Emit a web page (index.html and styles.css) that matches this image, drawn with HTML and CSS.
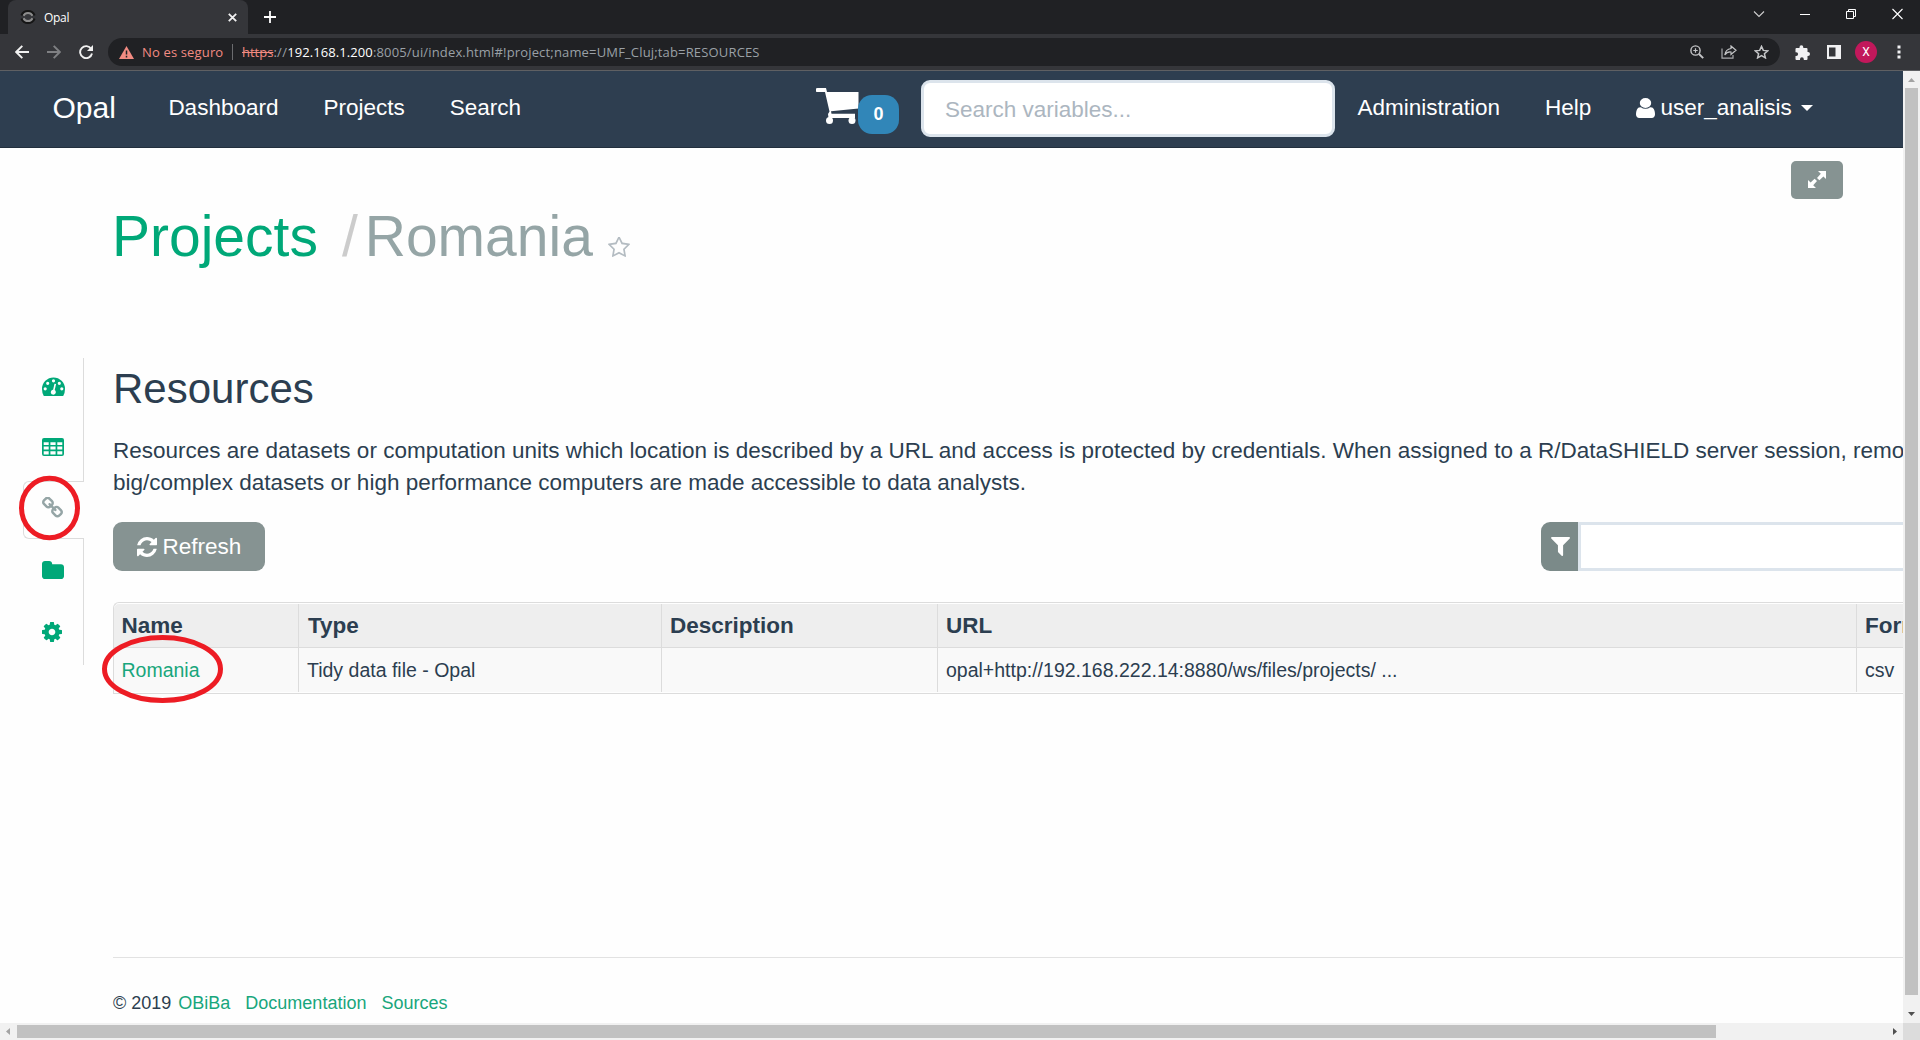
FILE: index.html
```html
<!DOCTYPE html>
<html lang="en">
<head>
<meta charset="utf-8">
<title>Opal</title>
<link rel="stylesheet" href="styles.css">
</head>
<body>
<div class="tabstrip">
  <div class="tab">
    <svg class="favicon" viewBox="0 0 16 16" width="16" height="16"><path d="M1.500 6.500A7 7 0 0 1 14.500 6.500M1.500 9.500A7 7 0 0 0 14.500 9.500" fill="none" stroke="#151515" stroke-width="2.200"/><path d="M3.500 6.800A5 5 0 0 1 12.500 6.800M3.500 9.200A5 5 0 0 0 12.500 9.200" fill="none" stroke="#8d8d8d" stroke-width="2"/></svg>
    <span class="tab-title">Opal</span>
    <svg class="tab-close" width="9" height="9" viewBox="0 0 9 9"><path d="M.8.8l7.400 7.400M8.200.8L.8 8.200" stroke="#f1f1f1" stroke-width="1.800"/></svg>
  </div>
  <svg class="new-tab" width="12" height="12" viewBox="0 0 12 12"><path d="M6 0v12M0 6h12" stroke="#fff" stroke-width="1.800"/></svg>
  <div class="window-controls">
    <svg width="12" height="12" viewBox="0 0 12 12"><path d="M1 3.500l5 5 5-5" fill="none" stroke="#cfcfcf" stroke-width="1.100"/></svg>
    <svg width="10" height="12" viewBox="0 0 10 12"><path d="M0 6.500h10" stroke="#fff"/></svg>
    <svg width="10" height="12" viewBox="0 0 10 12"><path d="M.5 3.500h7v7h-7zM2.500 3.500v-2h7v7h-2" fill="none" stroke="#fff"/></svg>
    <svg width="11" height="12" viewBox="0 0 11 12"><path d="M.5 1l10 10M10.500 1l-10 10" stroke="#fff" stroke-width="1.100"/></svg>
  </div>
</div>
<div class="toolbar">
  <svg class="nav-back" width="14" height="14" viewBox="0 0 14 14"><path d="M14 7H1.500M7.300.8L1.200 7l6.100 6.200" fill="none" stroke="#f1f1f1" stroke-width="1.900"/></svg>
  <svg class="nav-forward" width="14" height="14" viewBox="0 0 14 14"><path d="M0 7h12.500M6.700.8L12.800 7l-6.100 6.200" fill="none" stroke="#7f8083" stroke-width="1.900"/></svg>
  <svg class="nav-reload" width="14" height="14" viewBox="0 0 14 14"><path d="M12.200 3.900A6 6 0 1 0 13 8.500" fill="none" stroke="#f1f1f1" stroke-width="1.900"/><path d="M14 0v6H8z" fill="#f1f1f1"/></svg>
  <div class="omnibox">
    <svg class="warning" width="15" height="13" viewBox="0 0 15 13"><path d="M7.500 0L15 13H0z" fill="#f28b82"/><path d="M7.500 4.500v4M7.500 9.800v1.600" stroke="#202124" stroke-width="1.500"/></svg>
    <span class="insecure">No es seguro</span>
    <span class="divider"></span>
    <span class="url"><span class="scheme">https</span><span class="slashes">://</span><span class="host">192.168.1.200</span><span class="path">:8005/ui/index.html#!project;name=UMF_Cluj;tab=RESOURCES</span></span>
    <div class="omnibox-actions">
      <svg width="14" height="14" viewBox="0 0 14 14"><circle cx="5.500" cy="5.500" r="4.600" fill="none" stroke="#c4c5c7" stroke-width="1.400"/><path d="M3.300 5.500h4.400M5.500 3.300v4.400" stroke="#c4c5c7" stroke-width="1.200"/><path d="M9 9l4.200 4.200" stroke="#c4c5c7" stroke-width="1.900"/></svg>
      <svg width="16" height="14" viewBox="0 0 16 14"><path d="M1 3.500v9.700h11V10" fill="none" stroke="#a9aaad" stroke-width="1.200"/><path d="M10 1l5 4.200-5 4.200V7Q6 6.500 3.800 10 4.500 4.300 10 3.500z" fill="none" stroke="#c4c5c7" stroke-width="1.200"/></svg>
      <svg width="15" height="14" viewBox="0 0 15 14"><path d="M7.500 1.400l1.800 4 4.400.4-3.300 2.900 1 4.200-3.900-2.200-3.900 2.200 1-4.200L1.300 5.800l4.400-.4z" fill="none" stroke="#c4c5c7" stroke-width="1.500"/></svg>
    </div>
  </div>
  <svg class="ext" width="15" height="15" viewBox="0 0 15 15"><path d="M1.500 3h3V2.200a1.900 1.900 0 0 1 3.800 0V3h3.200q1 0 1 1v3h.5a2 2 0 0 1 0 4h-.5v3q0 1-1 1H8.800v-.8a1.900 1.900 0 0 0-3.800 0v.8H1.500q-1 0-1-1v-3h.7a1.900 1.900 0 0 0 0-3.800H.5V4q0-1 1-1z" fill="#f1f1f3"/></svg>
  <svg class="panel" width="14" height="14" viewBox="0 0 14 14"><path fill-rule="evenodd" d="M0 0h14v14H0zM2 2.500v9h6.500v-9z" fill="#f1f1f3"/></svg>
  <span class="avatar">X</span>
  <svg class="kebab" width="4" height="14" viewBox="0 0 4 14"><path d="M.5.500h3v3h-3zM.5 5.500h3v3h-3zM.5 10.500h3v3h-3z" fill="#f1f1f3"/></svg>
</div>

<div class="frame">
  <div class="viewport">
    <nav class="navbar">
      <span class="brand">Opal</span>
      <span class="nav-first">Dashboard</span>
      <span class="nav-item">Projects</span>
      <span class="nav-item">Search</span>
      <svg class="cart" width="43" height="36" viewBox="0 0 43 36"><path d="M1.500 0H10l1 4h31.500v16.500L15 23.300l.5 2.500H39V30H12.500l-.5-4 1.500-2.500L9 4H1.500a2 2 0 0 1 0-4z" fill="#fff"/><circle cx="13.500" cy="32.500" r="3.500" fill="#fff"/><circle cx="36" cy="32.500" r="3.500" fill="#fff"/></svg>
      <span class="badge">0</span>
      <span class="search">Search variables...</span>
      <span class="nav-admin">Administration</span>
      <span class="nav-item">Help</span>
      <svg class="user" width="19" height="20" viewBox="256 128 1280 1536" preserveAspectRatio="none"><path fill="#fff" d="M1536 1399q0 109-62.500 187t-150.500 78h-854q-88 0-150.500-78t-62.500-187q0-85 8.500-160.500t31.500-152 58.500-131 94-89 134.500-34.500q131 128 313 128t313-128q76 0 134.500 34.500t94 89 58.500 131 31.500 152 8.500 160.500zm-256-887q0 159-112.500 271.500t-271.500 112.500-271.500-112.500-112.500-271.500 112.500-271.500 271.500-112.500 271.500 112.500 112.500 271.500z"/></svg>
      <span class="username">user_analisis</span>
      <span class="caret"></span>
    </nav>

    <div class="page-actions">
      <span class="expand"><svg width="18" height="17" viewBox="0 0 18 17"><path d="M10 0h8v8l-2.600-2.600-4 3.800L9 7l3.800-4.200zM8 17H0V9l2.600 2.600 4-3.800L9 10l-3.800 4.200z" fill="#fff"/></svg></span>
    </div>
    <h1 class="title"><span class="crumb">Projects</span><span class="slash">/</span><span class="current">Romania</span><svg class="star" width="22" height="21" viewBox="64 128 1664 1542"><path fill="#b4bcc2" d="M1201 1004l306-297-422-62-189-382-189 382-422 62 306 297-73 421 378-199 377 199zm527-357q0 22-26 48l-363 354 86 500q1 7 1 20 0 50-41 50-19 0-40-12l-449-236-449 236q-22 12-40 12-21 0-31.500-14.500t-10.500-35.500q0-6 2-20l86-500-364-354q-25-27-25-48 0-37 56-46l502-73 225-455q19-41 49-41t49 41l225 455 502 73q56 9 56 46z"/></svg></h1>

    <div class="project">
      <aside class="side">
        <div class="side-group upper">
          <svg width="23" height="19" viewBox="0 0 23 19"><path fill="#00a878" fill-rule="evenodd" d="M1.800 19Q0 16 0 12a11.500 11.500 0 0 1 23 0q0 4-1.800 7zM3.200 10.200a1.600 1.600 0 1 0 .01 3.200 1.600 1.600 0 1 0-.01-3.200zM5.700 4.700a1.600 1.600 0 1 0 .01 3.200 1.600 1.600 0 1 0-.01-3.200zM11.500 2.200a1.600 1.600 0 1 0 .01 3.200 1.600 1.600 0 1 0-.01-3.200zM17.300 4.700a1.600 1.600 0 1 0 .01 3.200 1.600 1.600 0 1 0-.01-3.200zM19.800 10.200a1.600 1.600 0 1 0 .01 3.200 1.600 1.600 0 1 0-.01-3.200zM12.500 6.700l-1.400 6a2.500 2.500 0 1 0 1.600.4l1.400-6z"/></svg>
          <svg class="grid-icon" width="22" height="18" viewBox="0 0 22 18"><path fill="#00a878" fill-rule="evenodd" d="M2 0h18q2 0 2 2v14q0 2-2 2H2q-2 0-2-2V2Q0 0 2 0zM1.700 4.200v2.900h5V4.200zM8.400 4.200v2.900h5.200V4.200zM15.300 4.200v2.900h5V4.200zM1.700 8.600v3h5v-3zM8.400 8.600v3h5.200v-3zM15.300 8.600v3h5v-3zM1.700 13.200v3.200h5v-3.200zM8.400 13.200v3.200h5.200v-3.200zM15.300 13.200v3.200h5v-3.200z"/></svg>
        </div>
        <div class="side-active">
          <svg width="21" height="21" viewBox="80 80 1632 1568"><path fill="#95a5a6" d="M1520 1216q0-40-28-68l-208-208q-28-28-68-28-42 0-72 32 3 3 19 18.500t21.500 21.500 15 19 13 25.500 3.500 27.500q0 40-28 68t-68 28q-15 0-27.500-3.500t-25.500-13-19-15-21.500-21.500-18.500-19q-33 31-33 73 0 40 28 68l206 207q27 27 68 27 40 0 68-26l147-146q28-28 28-67zm-703-705q0-40-28-68l-206-207q-28-28-68-28-39 0-68 27l-147 146q-28 28-28 67 0 40 28 68l208 208q27 27 68 27 42 0 72-31-3-3-19-18.500t-21.500-21.500-15-19-13-25.500-3.500-27.500q0-40 28-68t68-28q15 0 27.500 3.500t25.500 13 19 15 21.500 21.500 18.500 19q33-31 33-73zm895 705q0 120-85 203l-147 146q-83 83-203 83-121 0-204-85l-206-207q-83-83-83-203 0-123 88-209l-88-88q-86 88-208 88-120 0-204-84l-208-208q-84-84-84-204t85-203l147-146q83-83 203-83 121 0 204 85l206 207q83 83 83 203 0 123-88 209l88 88q86-88 208-88 120 0 204 84l208 208q84 84 84 204z"/></svg>
        </div>
        <div class="side-group lower">
          <svg width="22" height="18" viewBox="64 128 1664 1408" preserveAspectRatio="none"><path fill="#00a878" d="M1728 608v704q0 92-66 158t-158 66h-1216q-92 0-158-66t-66-158v-960q0-92 66-158t158-66h320q92 0 158 66t66 158v32h672q92 0 158 66t66 158z"/></svg>
          <svg class="gear" width="20" height="20" viewBox="128 128 1536 1536"><path fill="#00a878" d="M1152 896q0-106-75-181t-181-75-181 75-75 181 75 181 181 75 181-75 75-181zm512-109v222q0 12-8 23t-20 13l-185 28q-19 54-39 91 35 50 107 138 10 12 10 25t-9 23q-27 37-99 108t-94 71q-12 0-26-9l-138-108q-44 23-91 38-16 136-29 186-7 28-36 28h-222q-14 0-24.500-8.500t-11.500-21.500l-28-184q-49-16-90-37l-141 107q-10 9-25 9-14 0-25-11-126-114-165-168-7-10-7-23 0-12 8-23 15-21 51-66.500t54-70.500q-27-50-41-99l-183-27q-13-2-21-12.500t-8-23.500v-222q0-12 8-23t19-13l186-28q14-46 39-92-40-57-107-138-10-12-10-24 0-10 9-23 26-36 98.500-107.500t94.500-71.500q13 0 26 10l138 107q44-23 91-38 16-136 29-186 7-28 36-28h222q14 0 24.500 8.500t11.500 21.500l28 184q49 16 90 37l142-107q9-9 24-9 13 0 25 10 129 119 165 170 7 8 7 22 0 12-8 23-15 21-51 66.500t-54 70.500q26 50 41 98l183 28q13 2 21 12.500t8 23.500z"/></svg>
        </div>
      </aside>

      <main class="content">
        <h2 class="section-title">Resources</h2>
        <p class="intro">Resources are datasets or computation units which location is described by a URL and access is protected by credentials. When assigned to a R/DataSHIELD server session, remote<br>big/complex datasets or high performance computers are made accessible to data analysts.</p>
        <div class="controls">
          <span class="refresh"><svg width="20" height="20" viewBox="128 128 1536 1536"><path fill="#fff" d="M1639 1056q0 5-1 7-64 268-268 434.500t-478 166.500q-146 0-282.500-55t-243.500-157l-129 129q-19 19-45 19t-45-19-19-45v-448q0-26 19-45t45-19h448q26 0 45 19t19 45-19 45l-137 137q71 66 161 102t187 36q134 0 250-65t186-179q11-17 53-117 8-23 30-23h192q13 0 22.500 9.500t9.500 22.500zm25-800v448q0 26-19 45t-45 19h-448q-26 0-45-19t-19-45 19-45l138-138q-148-137-349-137-134 0-250 65t-186 179q-11 17-53 117-8 23-30 23h-199q-13 0-22.500-9.500t-9.500-22.500v-7q65-268 270-434.500t480-166.500q146 0 284 55.500t245 156.500l130-129q19-19 45-19t45 19 19 45z"/></svg><span>Refresh</span></span>
          <div class="filter">
            <span class="filter-icon"><svg width="19" height="19" viewBox="188 256 1412 1408"><path fill="#fff" d="M1595 295q17 41-14 70l-493 493v742q0 42-39 59-13 5-25 5-27 0-45-19l-256-256q-19-19-19-45v-486l-493-493q-31-29-14-70 17-39 59-39h1280q42 0 59 39z"/></svg></span>
            <span class="filter-input"></span>
          </div>
        </div>
        <div class="table-box">
          <table class="resources">
            <colgroup><col class="c-name"><col class="c-type"><col class="c-desc"><col class="c-url"><col class="c-format"></colgroup>
            <thead><tr><th>Name</th><th class="wide">Type</th><th>Description</th><th>URL</th><th>Format</th></tr></thead>
            <tbody><tr><td class="link">Romania</td><td>Tidy data file - Opal</td><td></td><td>opal+http://192.168.222.14:8880/ws/files/projects/ ...</td><td>csv</td></tr></tbody>
          </table>
        </div>
        <footer class="footer">
          <span>© 2019</span><span class="f-obiba">OBiBa</span><span class="f-link">Documentation</span><span class="f-link">Sources</span>
        </footer>
      </main>
    </div>
  </div>
  <div class="vscroll">
    <svg class="arrow-up" width="7" height="4" viewBox="0 0 7 4"><path d="M3.500 0L7 4H0z" fill="#a3a3a3"/></svg>
    <span class="vthumb"></span>
    <svg class="arrow-down" width="7" height="4" viewBox="0 0 7 4"><path d="M0 0h7L3.500 4z" fill="#505050"/></svg>
  </div>
  <div class="hscroll">
    <svg class="arrow-left" width="4" height="7" viewBox="0 0 4 7"><path d="M4 0v7L0 3.500z" fill="#a3a3a3"/></svg>
    <span class="hthumb"></span>
    <svg class="arrow-right" width="4" height="7" viewBox="0 0 4 7"><path d="M0 0v7l4-3.500z" fill="#505050"/></svg>
  </div>
  <div class="corner"></div>
</div>
<svg class="annotations" width="1920" height="1040" viewBox="0 0 1920 1040"><g fill="none" stroke="#ed1c24" stroke-width="5"><ellipse cx="49.500" cy="508" rx="28" ry="29.700"/><ellipse cx="162.500" cy="669" rx="58" ry="31.500"/></g></svg>
</body>
</html>
```
FILE: styles.css
```css
* { box-sizing: border-box; }
body {
  margin: 0;
  width: 1920px;
  height: 1040px;
  display: flex;
  flex-direction: column;
  overflow: hidden;
  position: relative;
  background: #fefefe;
  font-family: "Liberation Sans", Arial, sans-serif;
  color: #2c3e50;
}
svg { display: block; flex: none; }

/* browser chrome */
.tabstrip, .toolbar { font-family: "Open Sans", "Noto Sans", sans-serif; }
.tabstrip {
  height: 34px;
  flex: none;
  display: flex;
  background: #202124;
  padding-left: 8px;
}
.tab {
  width: 240px;
  height: 34px;
  background: #35363a;
  border-radius: 8px 8px 0 0;
  display: flex;
  align-items: center;
  padding: 0 11px 0 12px;
}
.tab-title { margin-left: 8px; font-size: 12px; letter-spacing: -0.3px; color: #fff; }
.tab-close { margin-left: auto; }
.new-tab { margin: 11px 0 0 16px; }
.window-controls {
  margin-left: auto;
  display: flex;
  gap: 36px;
  padding: 8px 17px 0 0;
}
.window-controls svg:first-child { margin-right: -1px; }
.toolbar {
  height: 37px;
  flex: none;
  display: flex;
  align-items: center;
  background: #35363a;
  border-bottom: 1px solid #5f6063;
  padding-left: 15px;
}
.nav-forward, .nav-reload { margin-left: 18px; }
.omnibox {
  width: 1672px;
  height: 28px;
  margin-left: 15px;
  border-radius: 14px;
  background: #202124;
  display: flex;
  align-items: center;
  padding: 0 11px;
  font-size: 13px;
  line-height: 28px;
  white-space: nowrap;
}
.insecure { width: 90px; margin-left: 8px; letter-spacing: 0.15px; color: #f28b82; }
.divider { width: 1px; height: 16px; background: #6b6c6f; }
.url { display: flex; margin-left: 9px; color: #9aa0a6; }
.scheme { color: #f28b82; text-decoration: line-through; }
.slashes { letter-spacing: 0.3px; }
.host { color: #fff; letter-spacing: 0.08px; }
.path { letter-spacing: 0.16px; }
.omnibox-actions { margin-left: auto; display: flex; gap: 17px; }
.ext { margin-left: 15px; }
.panel { margin-left: 17px; }
.avatar {
  width: 22px;
  height: 22px;
  margin-left: 14px;
  border-radius: 50%;
  background: #c2185b;
  color: #fff;
  font: 12px/22px Roboto, sans-serif;
  text-align: center;
}
.kebab { margin-left: 20px; }

/* page frame with scrollbars */
.frame {
  flex: 1;
  display: grid;
  grid-template-columns: 1903px 17px;
  grid-template-rows: 952px 17px;
}
.viewport { overflow: hidden; background: #fefefe; }
.vscroll {
  background: #f1f1f1;
  display: flex;
  flex-direction: column;
  align-items: center;
}
.arrow-up { margin-top: 7px; }
.vthumb { width: 13px; height: 907px; margin-top: 6px; background: #c1c1c1; }
.arrow-down { margin-top: 17px; }
.hscroll { background: #f1f1f1; display: flex; align-items: center; }
.arrow-left { margin-left: 6px; }
.hthumb { width: 1699px; height: 13px; margin-left: 7px; background: #c1c1c1; }
.arrow-right { margin-left: 177px; }
.corner { background: #dcdcdc; }

/* application navbar */
.navbar {
  height: 77px;
  background: #2e3e50;
  border-bottom: 1px solid #222f3d;
  display: flex;
  align-items: flex-start;
  padding-left: 52.5px;
  color: #fff;
  font-size: 22.5px;
  line-height: 74px;
  white-space: nowrap;
}
.brand { font-size: 30px; }
.nav-first { margin-left: 52.5px; }
.nav-item { margin-left: 45px; }
.cart { margin: 17px 0 0 295px; }
.badge {
  width: 41px;
  height: 39px;
  margin: 24px 0 0 -1px;
  border-radius: 14px;
  background: #3186b8;
  font-size: 18px;
  font-weight: bold;
  line-height: 39px;
  text-align: center;
}
.search {
  width: 414px;
  height: 57px;
  margin: 9px 0 0 22px;
  border: 3px solid #dce4ec;
  border-radius: 9px;
  background: #fff;
  padding-left: 21px;
  line-height: 53px;
  color: #acb6c0;
}
.nav-admin { margin-left: 22.5px; }
.user { margin: 27px 0 0 45px; }
.username { margin-left: 5px; }
.caret {
  margin: 34px 0 0 9px;
  border: 6px solid transparent;
  border-top-color: #fff;
  border-bottom: 0;
}

/* page header */
.page-actions { display: flex; justify-content: flex-end; padding: 13px 60px 0 0; }
.expand {
  width: 52px;
  height: 38px;
  border-radius: 5px;
  background: #869392;
  display: flex;
  align-items: center;
  justify-content: center;
  padding: 0 1px 2px 0;
}
.title {
  margin: 5px 0 0 112px;
  height: 64px;
  display: flex;
  font-size: 57px;
  font-weight: normal;
  line-height: 64px;
}
.crumb { color: #00a878; }
.slash { margin-left: 24px; color: #ccc; }
.current { margin-left: 7px; color: #95a5a6; }
.star { margin: 33px 0 0 15px; }

/* project layout */
.project { display: flex; margin-top: 90px; }
.side { width: 84px; flex: none; }
.side-group { border-right: 1px solid #dcdcdc; padding-left: 42px; }
.upper { height: 123px; padding-top: 19px; }
.grid-icon { margin-top: 42px; }
.side-active {
  height: 58px;
  margin-left: 23px;
  padding: 15px 0 0 18px;
  border: 1px solid #dcdcdc;
  border-right: 0;
  border-radius: 6px 0 0 6px;
}
.lower { height: 126px; padding-top: 22px; }
.gear { margin-top: 43px; }
.content { width: 2080px; flex: none; margin-left: 29px; padding-top: 7px; }
.section-title { margin: 0; font-size: 42px; line-height: 48px; font-weight: normal; }
.intro { margin: 22px 0 0; font-size: 22.5px; line-height: 32px; white-space: nowrap; }
.controls { display: flex; margin-top: 23px; }
.refresh {
  width: 152px;
  height: 49px;
  border-radius: 9px;
  background: #869392;
  color: #fff;
  font-size: 22.5px;
  line-height: 48px;
  display: flex;
  align-items: center;
  justify-content: center;
  gap: 6px;
}
.filter { display: flex; width: 600px; margin-left: 1276px; }
.filter-icon {
  width: 37px;
  height: 49px;
  border-radius: 9px 0 0 9px;
  background: #7b8a89;
  display: flex;
  align-items: center;
  justify-content: center;
  padding-left: 1px;
}
.filter-input { flex: 1; border: 3px solid #dce4ec; background: #fff; }

/* resources table */
.table-box {
  margin-top: 31px;
  border: 1px solid #dcdcdc;
  border-right: 0;
  border-radius: 6px 0 0 0;
  padding: 1px 0;
}
.resources {
  width: 100%;
  table-layout: fixed;
  border-collapse: separate;
  border-spacing: 0;
  line-height: 32px;
}
.c-name { width: 184px; }
.c-type { width: 363px; }
.c-desc { width: 276px; }
.c-url { width: 919px; }
th, td { padding: 0 0 0 8px; border-left: 1px solid #dcdcdc; text-align: left; white-space: nowrap; }
th:first-child, td:first-child { border-left: 0; padding-left: 7.5px; }
th { height: 43px; background: #eee; font-size: 22.5px; }
td { height: 45px; background: #f9f9f9; border-top: 1px solid #dcdcdc; font-size: 19.5px; }
th:first-child { border-radius: 5px 0 0 0; }
.wide { padding-left: 9px; }
.link { color: #18a67c; }

.footer {
  margin-top: 263px;
  padding-top: 32px;
  border-top: 1px solid #e2e2e2;
  display: flex;
  font-size: 18px;
  line-height: 26px;
  color: #2c3e50;
}
.f-obiba { margin-left: 7px; color: #18a67c; }
.f-link { margin-left: 15px; color: #18a67c; }

.annotations { position: absolute; left: 0; top: 0; pointer-events: none; }
```
